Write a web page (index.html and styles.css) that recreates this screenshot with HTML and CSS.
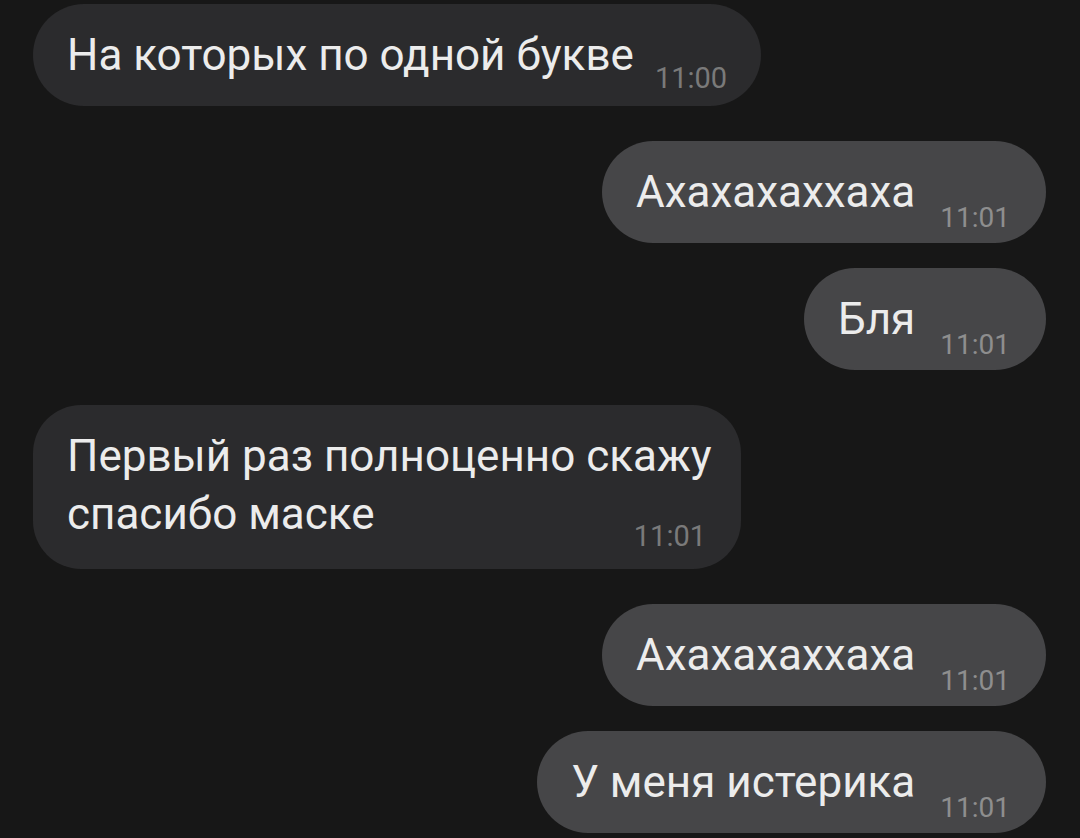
FILE: index.html
```html
<!DOCTYPE html>
<html lang="ru">
<head>
  <meta charset="UTF-8" />
  <meta name="viewport" content="width=device-width, initial-scale=1.0"/>
  <title>Чат</title>
  <link rel="stylesheet" href="styles.css">
</head>
<body>
  <main class="chat">
    <div class="group in">
      <div class="bubble">
        <span class="text">На которых по одной букве</span>
        <span class="time">11:00</span>
      </div>
    </div>

    <div class="group out">
      <div class="bubble">
        <span class="text">Ахахахаххаха</span>
        <span class="time">11:01</span>
      </div>
      <div class="bubble">
        <span class="text">Бля</span>
        <span class="time">11:01</span>
      </div>
    </div>

    <div class="group in">
      <div class="bubble multi">
        <p class="text">Первый раз полноценно скажу спасибо маске<span class="time">11:01</span></p>
      </div>
    </div>

    <div class="group out">
      <div class="bubble">
        <span class="text">Ахахахаххаха</span>
        <span class="time">11:01</span>
      </div>
      <div class="bubble">
        <span class="text">У меня истерика</span>
        <span class="time">11:01</span>
      </div>
    </div>
  </main>
</body>
</html>
```

FILE: styles.css
```css
:root {
  --bg: #171717;
  --in: #2b2b2d;
  --out: #464648;
  --fg: #ececec;
}

* {
  box-sizing: border-box;
}

body {
  margin: 0;
  background: var(--bg);
  color: var(--fg);
  font-family: Roboto, 'Noto Sans', sans-serif;
  overflow: hidden;
}

.chat {
  display: flex;
  flex-direction: column;
  gap: 35px;
  padding: 4px 34px 0 33px;
}

.group {
  display: flex;
  flex-direction: column;
  gap: 25px;
}

.group.in {
  align-items: flex-start;
}

.group.out {
  align-items: flex-end;
}

.bubble {
  display: flex;
  align-items: flex-end;
  border-radius: 51px;
  padding: 22px 34px 11px 34px;
}

.in .bubble {
  background: var(--in);
}

.out .bubble {
  background: var(--out);
  padding: 22px 36px 11px 34px;
}

.text {
  margin: 0 0 11px;
  font-size: 44px;
  line-height: 58px;
}

.time {
  font-size: 29px;
  line-height: 34px;
  margin-left: 21px;
  color: #7a7a7a;
  white-space: nowrap;
}

.out .time {
  font-size: 28px;
  margin-left: 25px;
  margin-bottom: -3px;
  color: #8e8e8e;
}

/* two-line message: time floats at the right of the last line */
.bubble.multi {
  display: block;
  border-radius: 48px;
  padding: 22px 28px 16px 34px;
}

.multi .text {
  display: flow-root;
  max-width: 646px;
  margin: 0;
}

.multi .time {
  float: right;
  margin: 34px 7px 0 0;
}
```
